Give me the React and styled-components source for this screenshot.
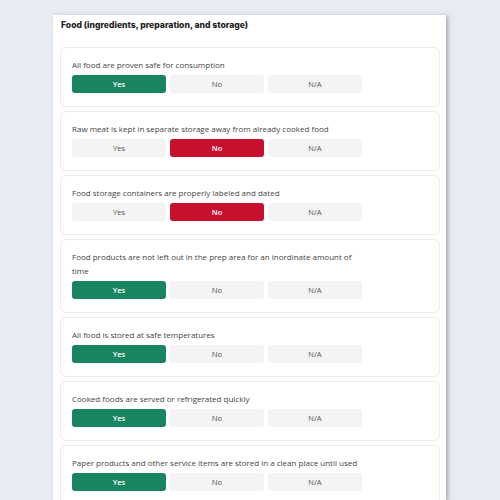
import React from "react";
import styled, { createGlobalStyle } from "styled-components";

const GlobalStyle = createGlobalStyle`
	html, body {
		margin: 0;
		padding: 0;
		background: #e7ebf3;
		height: 500px;
		overflow: hidden;
	}
`;

const Page = styled.div`
	width: 500px;
	height: 500px;
	padding: 15px 54px 0 53px;
	box-sizing: border-box;
`;

const Panel = styled.div`
	background: #ffffff;
	height: 100%;
	padding: 4px 6px 0 7px;
	box-sizing: border-box;
	box-shadow: 2px 1px 4px rgba(60, 70, 90, 0.4);
	display: flex;
	flex-direction: column;
	gap: 4px;
`;

const Title = styled.div`
	font-family: "Inter", "Liberation Sans", sans-serif;
	font-weight: 800;
	font-size: 8.6px;
	line-height: 12px;
	color: #222;
	padding-left: 1px;
	margin-bottom: 12px;
`;

const Card = styled.div`
	flex-shrink: 0;
	border: 1px solid #ededed;
	border-radius: 6px;
	padding: 10px 11px 13px 11px;
	display: flex;
	flex-direction: column;
	gap: 3px;
`;

const Question = styled.div`
	font-family: "Open Sans", "Liberation Sans", sans-serif;
	font-size: 8px;
	line-height: 14px;
	color: #444;
	max-width: 288px;
`;

const Options = styled.div`
	display: flex;
	gap: 4px;
`;

const Option = styled.div`
	width: 94px;
	height: 18px;
	border-radius: 3px;
	display: flex;
	align-items: center;
	justify-content: center;
	font-family: "Open Sans", "Liberation Sans", sans-serif;
	font-size: 7.6px;
	background: ${(p) =>
		p.$active === "Yes" ? "#1a845e" : p.$active === "No" ? "#c8102e" : "#f4f4f4"};
	color: ${(p) => (p.$active ? "#ffffff" : "#555")};
	font-weight: ${(p) => (p.$active ? 600 : 400)};
`;

const items = [
	{ q: "All food are proven safe for consumption", a: "Yes" },
	{ q: "Raw meat is kept in separate storage away from already cooked food", a: "No" },
	{ q: "Food storage containers are properly labeled and dated", a: "No" },
	{
		q: "Food products are not left out in the prep area for an inordinate amount of time",
		a: "Yes",
	},
	{ q: "All food is stored at safe temperatures", a: "Yes" },
	{ q: "Cooked foods are served or refrigerated quickly", a: "Yes" },
	{ q: "Paper products and other service items are stored in a clean place until used", a: "Yes" },
];

export default function App() {
	return (
		<>
			<GlobalStyle />
			<Page>
				<Panel>
					<Title>Food (ingredients, preparation, and storage)</Title>
					{items.map((item) => (
						<Card key={item.q}>
							<Question>{item.q}</Question>
							<Options>
								{["Yes", "No", "N/A"].map((o) => (
									<Option key={o} $active={item.a === o ? o : null}>
										{o}
									</Option>
								))}
							</Options>
						</Card>
					))}
				</Panel>
			</Page>
		</>
	);
}
